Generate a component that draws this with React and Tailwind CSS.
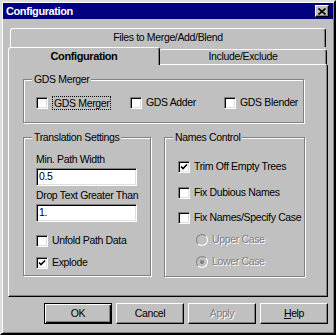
import React from 'react'

function CheckBox({ checked, label, focus }) {
  return (
    <div className="flex h-[13px] items-center gap-[4px] whitespace-nowrap">
      <span className="flex h-[12px] w-[12px] shrink-0 items-center justify-center border border-t-[#808080] border-l-[#808080] border-r-white border-b-white bg-white shadow-[inset_1px_1px_0_#000,inset_-1px_-1px_0_#dfdfdf]">
        {checked && (
          <svg width="8" height="8" viewBox="0 0 8 8">
            <path d="M1 3.5 L3 5.5 L7 1.5" stroke="#000" strokeWidth="1.6" fill="none" />
          </svg>
        )}
      </span>
      <span className={focus ? 'border border-dotted border-black px-[1px] leading-[12px]' : 'leading-[13px]'}>{label}</span>
    </div>
  )
}

function Radio({ checked, label }) {
  return (
    <div className="flex h-[13px] items-center gap-[4px] whitespace-nowrap">
      <span className="flex h-[12px] w-[12px] shrink-0 items-center justify-center rounded-full border border-t-[#808080] border-l-[#808080] border-r-white border-b-white bg-[#c0c0c0]">
        {checked && <span className="h-[4px] w-[4px] rounded-full bg-[#808080]" />}
      </span>
      <span className="text-[#808080] [text-shadow:1px_1px_0_#fff]">{label}</span>
    </div>
  )
}

function Group({ title, className, children }) {
  return (
    <div className={'border border-[#808080] shadow-[inset_1px_1px_0_#fff,1px_1px_0_#fff] ' + className}>
      <div className="-mt-[7px] ml-[8px] w-fit whitespace-nowrap bg-[#c0c0c0] px-[2px] leading-[13px]">{title}</div>
      {children}
    </div>
  )
}

function TextBox({ value }) {
  return (
    <div className="h-[18px] w-[101px] border border-t-[#808080] border-l-[#808080] border-r-white border-b-white bg-white pl-[2px] leading-[15px] shadow-[inset_1px_1px_0_#000,inset_-1px_-1px_0_#dfdfdf]">
      {value}
    </div>
  )
}

function Button({ children, isDefault, disabled }) {
  return (
    <button
      className={
        'h-[21px] w-[68px] bg-[#c0c0c0] ' +
        (isDefault
          ? 'border border-black shadow-[inset_1px_1px_0_#fff,inset_-1px_-1px_0_#000,inset_-2px_-2px_0_#808080]'
          : 'border border-t-white border-l-white border-r-black border-b-black shadow-[inset_-1px_-1px_0_#808080]') +
        (disabled ? ' text-[#808080] [text-shadow:1px_1px_0_#fff]' : '')
      }
    >
      {children}
    </button>
  )
}

export default function App() {
  return (
    <div className="h-[335px] w-[336px] border-2 border-t-[#dfdfdf] border-l-[#dfdfdf] border-r-black border-b-black bg-[#c0c0c0] font-['Liberation_Sans',Arial,sans-serif] text-[10.5px] tracking-[-0.35px] text-black shadow-[inset_1px_1px_0_#fff,inset_-1px_-1px_0_#808080]">
      <div className="mx-[1px] mt-[1px] flex h-[16px] items-center justify-between bg-[#000080] pl-[3px] pr-[4px]">
        <span className="text-[11px] font-bold tracking-[-0.4px] text-white">Configuration</span>
        <span className="flex h-[12px] w-[14px] items-center justify-center border border-t-white border-l-white border-r-black border-b-black bg-[#c0c0c0] shadow-[inset_-1px_-1px_0_#808080]">
          <svg width="8" height="7" viewBox="0 0 8 7">
            <path d="M0.5 0.5 L7.5 6.5 M7.5 0.5 L0.5 6.5" stroke="#000" strokeWidth="1.6" />
          </svg>
        </span>
      </div>

      <div className="px-[6px] pt-[9px]">
        <div className="mx-[2px] flex h-[19px] items-center justify-center rounded-t-[3px] border border-b-0 border-t-white border-l-white border-r-black shadow-[inset_-1px_0_0_#808080]">
          Files to Merge/Add/Blend
        </div>
        <div className="flex h-[18px]">
          <div className="flex w-[152px] items-center justify-center rounded-t-[3px] border border-b-0 border-t-white border-l-white border-r-black text-[11px] font-bold tracking-[-0.4px] shadow-[inset_-1px_0_0_#808080]">
            Configuration
          </div>
          <div className="mr-[1px] mt-[2px] flex flex-1 items-center justify-center rounded-t-[3px] border border-t-white border-l-0 border-r-black border-b-white shadow-[inset_-1px_0_0_#808080]">
            Include/Exclude
          </div>
        </div>
        <div className="h-[232px] border border-t-0 border-l-white border-r-black border-b-black px-[14px] pt-[14px] shadow-[inset_-1px_-1px_0_#808080]">
          <Group title="GDS Merger" className="h-[44px] w-[281px]">
            <div className="ml-[12px] mt-[10px] grid grid-cols-[94px_94px_94px]">
              <CheckBox label="GDS Merger" focus />
              <CheckBox label="GDS Adder" />
              <CheckBox label="GDS Blender" />
            </div>
          </Group>
          <div className="mt-[14px] flex gap-[13px]">
            <Group title="Translation Settings" className="h-[139px] w-[128px]">
              <div className="ml-[12px] flex flex-col">
                <div className="mt-[9px] leading-[13px]">Min. Path Width</div>
                <div className="mt-[2px]"><TextBox value="0.5" /></div>
                <div className="mt-[3px] leading-[13px]">Drop Text Greater Than</div>
                <div className="mt-[2px]"><TextBox value="1." /></div>
                <div className="mt-[12px]"><CheckBox label="Unfold Path Data" /></div>
                <div className="mt-[9px]"><CheckBox label="Explode" checked /></div>
              </div>
            </Group>
            <Group title="Names Control" className="h-[140px] w-[141px]">
              <div className="ml-[13px] flex flex-col">
                <div className="mt-[16px]"><CheckBox label="Trim Off Empty Trees" checked /></div>
                <div className="mt-[13px]"><CheckBox label="Fix Dubious Names" /></div>
                <div className="mt-[12px]"><CheckBox label="Fix Names/Specify Case" /></div>
                <div className="ml-[18px] mt-[9px]"><Radio label="Upper Case" /></div>
                <div className="ml-[18px] mt-[9px]"><Radio label="Lower Case" checked /></div>
              </div>
            </Group>
          </div>
        </div>
        <div className="mt-[6px] flex justify-end gap-[4px]">
          <Button isDefault>OK</Button>
          <Button>Cancel</Button>
          <Button disabled>Apply</Button>
          <Button><span className="underline">H</span>elp</Button>
        </div>
      </div>
    </div>
  )
}
